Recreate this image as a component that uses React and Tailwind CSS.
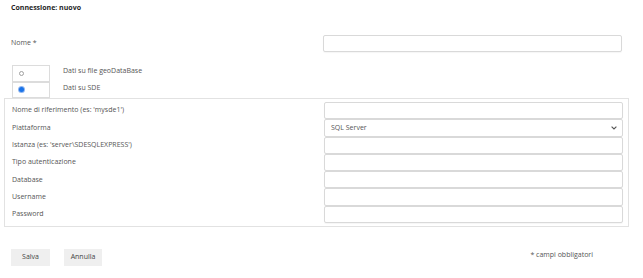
const fields = [
  { label: "Nome di riferimento (es: 'mysde1')" },
  { label: 'Piattaforma', select: 'SQL Server' },
  { label: "Istanza (es: 'server\\SDESQLEXPRESS')" },
  { label: 'Tipo autenticazione' },
  { label: 'Database' },
  { label: 'Username' },
  { label: 'Password' },
];

const Input = () => (
  <div className="w-[299px] h-full border border-[#d9d9d9] rounded-[2px] bg-white shadow-[0_1px_1px_rgba(0,0,0,0.04)]" />
);

const Select = ({ value }) => (
  <div className="w-[299px] h-full border border-[#d9d9d9] rounded-[2px] bg-white flex items-center justify-between pl-[6px] pr-[5px]">
    <span>{value}</span>
    <svg width="6" height="4" viewBox="0 0 6 4">
      <path d="M0.6 0.6 L3 3 L5.4 0.6" fill="none" stroke="#555" strokeWidth="1.1" />
    </svg>
  </div>
);

const Radio = ({ checked }) =>
  checked ? (
    <span className="w-[5px] h-[5px] rounded-full bg-[#1a73e8] ring-1 ring-[#8fb6f0]" />
  ) : (
    <span className="w-[5px] h-[5px] rounded-full border border-[#a0a0a0]" />
  );

export default function App() {
  return (
    <div className="w-[643px] h-[278px] bg-white text-[7px] text-[#555] font-['Open_Sans',sans-serif]">
      <div className="h-[16px] pl-[11px] flex items-center font-bold text-[#1f1f1f]">Connessione: nuovo</div>

      <div className="mt-[19px] h-[17px] flex items-center">
        <span className="flex-1 pl-[11px]">Nome *</span>
        <div className="h-full mr-[21px]">
          <Input />
        </div>
      </div>

      <div className="mt-[13px] pl-[12px]">
        {[
          { label: 'Dati su file geoDataBase', checked: false },
          { label: 'Dati su SDE', checked: true },
        ].map((r) => (
          <div key={r.label} className="flex h-[16.5px]">
            <div className="w-[38px] h-full border border-[#dcdcdc] flex items-center pl-[6px]">
              <Radio checked={r.checked} />
            </div>
            <span className="ml-[13px] -mt-[1px] leading-[14px]">{r.label}</span>
          </div>
        ))}
      </div>

      <div className="ml-[4px] w-[625px] border border-[#e2e2e2] py-[3px] pl-[6px] pr-[5px]">
        {fields.map((f) => (
          <div key={f.label} className="h-[17.3px] flex items-center">
            <span className="flex-1 pl-[1px]">{f.label}</span>
            <div className="h-full">{f.select ? <Select value={f.select} /> : <Input />}</div>
          </div>
        ))}
      </div>

      <div className="mt-[22px] flex items-start pl-[11px]">
        <button className="w-[39px] h-[17px] bg-[#efefef] text-[#444]">Salva</button>
        <button className="ml-[14px] w-[38px] h-[17px] bg-[#efefef] text-[#444]">Annulla</button>
        <span className="ml-auto mr-[50px] mt-[1px]">* campi obbligatori</span>
      </div>
    </div>
  );
}
